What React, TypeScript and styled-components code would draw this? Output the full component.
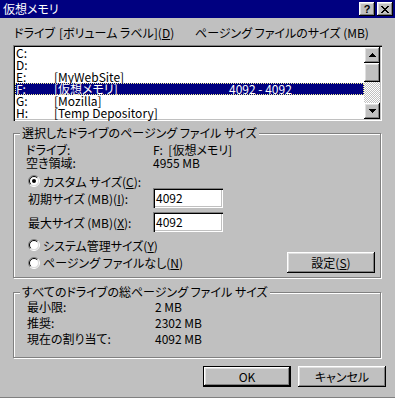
import React from 'react';
import styled, { createGlobalStyle } from 'styled-components';

const GlobalStyle = createGlobalStyle`
  html, body {
    margin: 0;
    padding: 0;
    background: #c0c0c0;
  }
  body {
    font-family: 'Noto Sans CJK JP', 'Liberation Sans', sans-serif;
    font-size: 12px;
    font-feature-settings: 'palt' 1;
    color: #000;
  }
`;

const raised = `
  box-shadow: inset -1px -1px #000, inset 1px 1px #fff, inset -2px -2px #808080,
    inset 2px 2px #dfdfdf;
`;

const sunken = `
  box-shadow: inset 1px 1px #808080, inset 2px 2px #000, inset -1px -1px #fff,
    inset -2px -2px #c0c0c0;
`;

interface RowProps {
  selected?: boolean;
}

interface MarginProps {
  top?: number;
}

const drives = [
  { drive: 'C:', label: '', size: '' },
  { drive: 'D:', label: '', size: '' },
  { drive: 'E:', label: '[MyWebSite]', size: '' },
  { drive: 'F:', label: '[仮想メモリ]', size: '4092 - 4092', selected: true },
  { drive: 'G:', label: '[Mozilla]', size: '' },
  { drive: 'H:', label: '[Temp Depository]', size: '' },
];

const totals = [
  { label: '最小限:', value: '2 MB' },
  { label: '推奨:', value: '2302 MB' },
  { label: '現在の割り当て:', value: '4092 MB' },
];

const Arrow = ({ down }: { down?: boolean }) => (
  <svg width="7" height="4" viewBox="0 0 7 4" shapeRendering="crispEdges">
    <g transform={down ? 'matrix(1 0 0 -1 0 4)' : undefined} fill="#000">
      <rect x="3" y="0" width="1" height="1" />
      <rect x="2" y="1" width="3" height="1" />
      <rect x="1" y="2" width="5" height="1" />
      <rect x="0" y="3" width="7" height="1" />
    </g>
  </svg>
);

const CloseGlyph = () => (
  <svg width="8" height="7" viewBox="0 0 8 7" shapeRendering="crispEdges">
    {[0, 1, 2, 3, 4, 5, 6].map((i) => (
      <g key={i} fill="#000">
        <rect x={i} y={i} width="2" height="1" />
        <rect x={6 - i} y={i} width="2" height="1" />
      </g>
    ))}
  </svg>
);

const Radio = ({ checked }: { checked?: boolean }) => (
  <svg width="12" height="12" viewBox="0 0 12 12">
    <circle cx="6" cy="6" r="4.5" fill="#fff" />
    <path d="M2.1 9.9 A5.5 5.5 0 0 1 9.9 2.1" fill="none" stroke="#808080" />
    <path d="M2.8 9.2 A4.5 4.5 0 0 1 9.2 2.8" fill="none" stroke="#000" />
    <path d="M9.9 2.1 A5.5 5.5 0 0 1 2.1 9.9" fill="none" stroke="#fff" />
    <path d="M9.2 2.8 A4.5 4.5 0 0 1 2.8 9.2" fill="none" stroke="#dfdfdf" />
    {checked && <circle cx="6" cy="6" r="2" fill="#000" />}
  </svg>
);

const App = () => {
  return (
    <>
      <GlobalStyle />
      <Window>
        <TitleBar>
          <TitleText>仮想メモリ</TitleText>
          <CaptionButtons>
            <CaptionButton>
              <HelpMark>?</HelpMark>
            </CaptionButton>
            <CaptionButton>
              <CloseGlyph />
            </CaptionButton>
          </CaptionButtons>
        </TitleBar>

        <Body>
          <ListHeader>
            <HeaderLead>
              <span>ドライブ</span>
              <span>
                [ボリューム ラベル](<Accel>D</Accel>)
              </span>
            </HeaderLead>
            <span>ページング ファイルのサイズ (MB)</span>
          </ListHeader>

          <ListBox>
            <ListRows>
              {drives.map((d) => (
                <ListRow key={d.drive} selected={d.selected}>
                  <span>{d.drive}</span>
                  <span>{d.label}</span>
                  <span>{d.size}</span>
                </ListRow>
              ))}
            </ListRows>
            <ScrollBar>
              <ScrollButton>
                <Arrow />
              </ScrollButton>
              <ScrollThumb />
              <ScrollTrack />
              <ScrollButton>
                <Arrow down />
              </ScrollButton>
            </ScrollBar>
          </ListBox>

          <Group>
            <Legend>選択したドライブのページング ファイル サイズ</Legend>
            <GroupBody>
              <InfoGrid>
                <span>ドライブ:</span>
                <span>F:&nbsp;&nbsp;[仮想メモリ]</span>
                <span>空き領域:</span>
                <span>4955 MB</span>
              </InfoGrid>

              <RadioRow top={5}>
                <Radio checked />
                <span>
                  カスタム サイズ(<Accel>C</Accel>):
                </span>
              </RadioRow>

              <EditRow>
                <span>
                  初期サイズ (MB)(<Accel>I</Accel>):
                </span>
                <EditBox>4092</EditBox>
              </EditRow>
              <EditRow top={4}>
                <span>
                  最大サイズ (MB)(<Accel>X</Accel>):
                </span>
                <EditBox>4092</EditBox>
              </EditRow>

              <RadioRow top={6}>
                <Radio />
                <span>
                  システム管理サイズ(<Accel>Y</Accel>)
                </span>
              </RadioRow>

              <LastRow>
                <RadioRow>
                  <Radio />
                  <span>
                    ページング ファイルなし(<Accel>N</Accel>)
                  </span>
                </RadioRow>
                <PushButton>
                  設定(<Accel>S</Accel>)
                </PushButton>
              </LastRow>
            </GroupBody>
          </Group>

          <Group top={8}>
            <Legend>すべてのドライブの総ページング ファイル サイズ</Legend>
            <TotalsBody>
              {totals.map((t) => (
                <React.Fragment key={t.label}>
                  <span>{t.label}</span>
                  <span>{t.value}</span>
                </React.Fragment>
              ))}
            </TotalsBody>
          </Group>

          <ButtonRow>
            <PushButton isDefault>OK</PushButton>
            <PushButton>キャンセル</PushButton>
          </ButtonRow>
        </Body>
      </Window>
    </>
  );
};

const Window = styled.div`
  width: 395px;
  height: 398px;
  box-sizing: border-box;
  background: #c0c0c0;
  display: flex;
  flex-direction: column;
  border-bottom: 1px solid #808080;
  overflow: hidden;
`;

const TitleBar = styled.div`
  flex: none;
  height: 18px;
  background: #000080;
  color: #fff;
  display: flex;
  align-items: center;
  justify-content: space-between;
  padding: 0 2px 0 3px;
`;

const TitleText = styled.span`
  line-height: 18px;
`;

const CaptionButtons = styled.div`
  display: flex;
  gap: 2px;
`;

const CaptionButton = styled.div`
  width: 16px;
  height: 14px;
  box-sizing: border-box;
  background: #c0c0c0;
  display: flex;
  align-items: center;
  justify-content: center;
  ${raised}
`;

const HelpMark = styled.span`
  font-family: 'Liberation Sans', sans-serif;
  font-weight: 700;
  font-size: 11px;
  line-height: 12px;
  color: #000;
`;

const Body = styled.div`
  flex: 1;
  display: flex;
  flex-direction: column;
  padding: 9px 9px 0 13px;
`;

const Accel = styled.u`
  text-underline-offset: 1px;
`;

const ListHeader = styled.div`
  display: grid;
  grid-template-columns: 181px 1fr;
  padding-left: 1px;
  height: 12px;
  line-height: 12px;
  white-space: nowrap;
  margin-bottom: 6px;
`;

const HeaderLead = styled.div`
  display: flex;
  gap: 4px;
`;

const ListBox = styled.div`
  width: 369px;
  height: 76px;
  box-sizing: border-box;
  padding: 2px;
  display: flex;
  background: #fff;
  ${sunken}
`;

const ListRows = styled.div`
  flex: 1;
  display: flex;
  flex-direction: column;
`;

const ListRow = styled.div<RowProps>`
  display: grid;
  grid-template-columns: 38px 175px 1fr;
  padding-left: 1px;
  height: 12px;
  line-height: 12px;
  white-space: nowrap;
  background: ${({ selected }) => (selected ? '#000080' : 'transparent')};
  color: ${({ selected }) => (selected ? '#fff' : '#000')};
  outline: ${({ selected }) => (selected ? '1px dotted #f0f090' : 'none')};
  outline-offset: -1px;
`;

const ScrollBar = styled.div`
  width: 16px;
  display: flex;
  flex-direction: column;
`;

const ScrollButton = styled.div`
  height: 16px;
  flex: none;
  box-sizing: border-box;
  background: #c0c0c0;
  display: flex;
  align-items: center;
  justify-content: center;
  ${raised}
`;

const ScrollThumb = styled.div`
  height: 19px;
  flex: none;
  background: #c0c0c0;
  ${raised}
`;

const ScrollTrack = styled.div`
  flex: 1;
  background-image: conic-gradient(
    #c0c0c0 25%,
    #fff 0 50%,
    #c0c0c0 0 75%,
    #fff 0
  );
  background-size: 2px 2px;
`;

const Group = styled.fieldset<MarginProps>`
  margin: ${({ top }) => top ?? 6}px 0 0 0;
  padding: 0;
  min-inline-size: 0;
  width: 368px;
  box-sizing: border-box;
  border: 1px solid #808080;
  box-shadow: 1px 1px 0 #fff, inset 1px 1px 0 #fff;
`;

const Legend = styled.legend`
  margin-left: 6px;
  padding: 0 2px;
  line-height: 12px;
  background: #c0c0c0;
  white-space: nowrap;
`;

const GroupBody = styled.div`
  display: flex;
  flex-direction: column;
  padding: 4px 5px 4px 12px;
`;

const InfoGrid = styled.div`
  display: grid;
  grid-template-columns: 127px 1fr;
  line-height: 13px;
  white-space: nowrap;
`;

const RadioRow = styled.div<MarginProps>`
  display: flex;
  align-items: center;
  gap: 3px;
  height: 14px;
  padding-left: 2px;
  margin-top: ${({ top }) => top ?? 0}px;
  white-space: nowrap;
`;

const EditRow = styled.div<MarginProps>`
  display: grid;
  grid-template-columns: 125px 70px;
  align-items: center;
  height: 20px;
  padding-left: 2px;
  margin-top: ${({ top }) => top ?? 0}px;
  white-space: nowrap;
`;

const EditBox = styled.div`
  width: 70px;
  height: 20px;
  box-sizing: border-box;
  padding: 0 3px;
  line-height: 20px;
  background: #fff;
  ${sunken}
`;

const LastRow = styled.div`
  display: flex;
  align-items: center;
  justify-content: space-between;
  height: 21px;
`;

const PushButton = styled.div<{ isDefault?: boolean }>`
  width: 88px;
  height: 21px;
  box-sizing: border-box;
  display: flex;
  align-items: center;
  justify-content: center;
  background: #c0c0c0;
  white-space: nowrap;
  border: ${({ isDefault }) => (isDefault ? '1px solid #000' : 'none')};
  ${raised}
`;

const TotalsBody = styled.div`
  display: grid;
  grid-template-columns: 128px 1fr;
  line-height: 16px;
  padding: 1px 12px 10px 13px;
  white-space: nowrap;
`;

const ButtonRow = styled.div`
  display: flex;
  justify-content: flex-end;
  gap: 7px;
  margin-top: 8px;
`;

export default App;
